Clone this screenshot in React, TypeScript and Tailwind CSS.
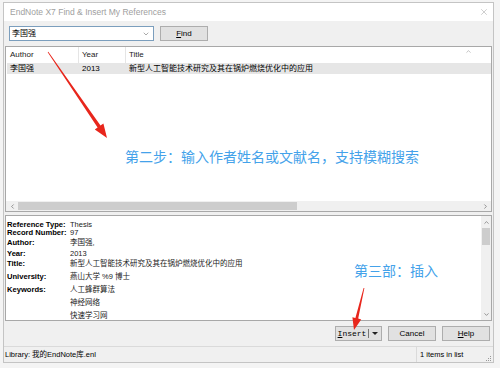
import { X, ChevronDown, ChevronUp, ChevronLeft, ChevronRight } from 'lucide-react'

const ui = "font-['Liberation_Sans','Noto_Sans_CJK_SC',sans-serif]"

const previewRows = [
  { label: 'Reference Type:', value: 'Thesis', h: 'h-[8px]' },
  { label: 'Record Number:', value: '97', h: 'h-[8px]' },
  { label: 'Author:', value: '李国强,', h: 'h-[12px]' },
  { label: 'Year:', value: '2013', h: 'h-[10px]' },
  { label: 'Title:', value: '新型人工智能技术研究及其在锅炉燃烧优化中的应用', h: 'h-[10px]' },
  { label: 'University:', value: '燕山大学 %9 博士', h: 'h-[16px]' },
  { label: 'Keywords:', value: '人工蜂群算法', h: 'h-[10px]' },
  { label: '', value: '神经网络', h: 'h-[16px]' },
  { label: '', value: '快速学习网', h: 'h-[10px]' },
]

function Annotations() {
  return (
    <div className="pointer-events-none absolute inset-0">
      <svg width="500" height="368" className="absolute left-0 top-0">
        <polygon
          fill="#e8261c"
          points="48.3,51.8 100.5,125.4 103.4,123.4 107,138 94.8,129.5 97.6,127.5 47.7,52.2"
        />
        <polygon
          fill="#e8261c"
          points="364.4,288.1 358.2,318.6 361.2,319.4 354,330 352.4,317.3 355.4,318 363.6,287.9"
        />
      </svg>
      <div className={`absolute left-[125px] top-[148px] text-[14px] leading-[18px] text-[#44a2ea] ${ui}`}>
        第二步：输入作者姓名或文献名，支持模糊搜索
      </div>
      <div className={`absolute left-[354px] top-[262px] text-[14px] leading-[18px] text-[#44a2ea] ${ui}`}>
        第三部：插入
      </div>
    </div>
  )
}

export default function App() {
  return (
    <div className={`relative h-[368px] w-[500px] overflow-hidden bg-[#f4f4f4] ${ui}`}>
      <div className="ml-[3px] mt-[2px] flex h-[361px] w-[491px] flex-col border border-[#c4c4c4] bg-[#f0f0f0]">
        {/* title bar */}
        <div className="flex h-[18px] items-center justify-between bg-white pl-[6px] pr-[4px] text-[8.5px] text-[#a0a0a0]">
          <span>EndNote X7 Find &amp; Insert My References</span>
          <X size={10} strokeWidth={1} className="text-[#8a8a8a]" />
        </div>

        {/* search toolbar */}
        <div className="flex h-[25px] items-center pl-[5px]">
          <div className="flex h-[15px] w-[145px] items-center justify-between border border-[#7b9ebd] bg-white pl-[2px] pr-[3px] text-[8px] text-black">
            <span>李国强</span>
            <ChevronDown size={8} strokeWidth={1.5} className="text-[#555]" />
          </div>
          <button
            type="button"
            className="ml-[6px] flex h-[15px] w-[48px] items-center justify-center border border-[#adadad] bg-[#e1e1e1] text-[8px] text-black"
          >
            <span className="underline">F</span>ind
          </button>
        </div>

        {/* result list */}
        <div className="mx-[1px] flex h-[166px] flex-col border border-[#a8a8a8] bg-white">
          <div className="relative flex h-[16px] items-center text-[8px] text-[#222]">
            <div className="flex h-full w-[73px] items-center border-r border-[#e5e5e5] pl-[4px]">Author</div>
            <div className="flex h-full w-[47px] items-center border-r border-[#e5e5e5] pl-[3px]">Year</div>
            <div className="flex h-full flex-1 items-center pl-[3px]">Title</div>
            <ChevronUp size={7} strokeWidth={1.5} className="absolute left-[459px] top-[1px] text-[#777]" />
          </div>
          <div className="ml-[1px] flex h-[11px] items-center bg-[#e6e6e6] text-[8px] text-black">
            <div className="w-[72px] pl-[3px]">李国强</div>
            <div className="w-[47px] pl-[3px]">2013</div>
            <div className="flex-1 pl-[3px]">新型人工智能技术研究及其在锅炉燃烧优化中的应用</div>
          </div>
          <div className="flex-1" />
          <div className="flex h-[10px] items-center bg-[#f0f0f0]">
            <div className="flex w-[12px] items-center justify-center">
              <ChevronLeft size={7} strokeWidth={2} className="text-[#555]" />
            </div>
            <div className="h-[8px] w-[279px] bg-[#cdcdcd]" />
            <div className="flex-1" />
            <div className="flex w-[12px] items-center justify-center">
              <ChevronRight size={7} strokeWidth={2} className="text-[#555]" />
            </div>
          </div>
        </div>

        {/* splitter */}
        <div className="h-[3px]" />

        {/* preview */}
        <div className="mx-[1px] flex h-[106px] border border-[#a8a8a8] bg-white">
          <div className="flex-1 pl-[1px] pt-[5px] text-black">
            {previewRows.map((r, i) => (
              <div key={i} className={`flex ${r.h} items-center`}>
                <div className="w-[63px] shrink-0 whitespace-nowrap text-[7.6px] font-bold leading-none">{r.label}</div>
                <div className="text-[7.5px] leading-none text-[#222]">{r.value}</div>
              </div>
            ))}
          </div>
          <div className="flex w-[10px] flex-col items-center bg-[#f0f0f0]">
            <ChevronUp size={7} strokeWidth={2} className="mt-[3px] text-[#555]" />
            <div className="mt-[2px] h-[17px] w-[8px] bg-[#cdcdcd]" />
            <div className="flex-1" />
            <ChevronDown size={7} strokeWidth={2} className="mb-[2px] text-[#555]" />
          </div>
        </div>

        {/* buttons */}
        <div className="flex h-[25px] items-center justify-end gap-[6px] pr-[3px] text-[8px] text-black">
          <div className="flex h-[15px] w-[47px] items-center border border-[#adadad] bg-[#e1e1e1]">
            <span className="flex-1 text-center font-['Liberation_Mono',monospace] text-[8px]">
              <span className="underline">I</span>nsert
            </span>
            <div className="h-[9px] w-px bg-[#777]" />
            <div className="flex w-[12px] items-center justify-center">
              <div className="h-0 w-0 border-x-[3px] border-t-[3px] border-x-transparent border-t-[#222]" />
            </div>
          </div>
          <div className="flex h-[15px] w-[48px] items-center justify-center border border-[#adadad] bg-[#e1e1e1]">
            Cancel
          </div>
          <div className="flex h-[15px] w-[48px] items-center justify-center border border-[#adadad] bg-[#e1e1e1]">
            <span className="underline">H</span>elp
          </div>
        </div>

        {/* status bar */}
        <div className="flex h-[16px] items-center border-t border-[#dadada] text-[7.5px] text-black">
          <div className="flex-1 pl-[1px]">Library: 我的EndNote库.enl</div>
          <div className="flex h-full w-[77px] items-center justify-between border-l border-[#dadada] pl-[3px]">
            <span>1 items in list</span>
            <svg width="6" height="6" className="mr-[1px] mt-[8px] text-[#999]">
              <rect x="4" y="0" width="1" height="1" fill="currentColor" />
              <rect x="2" y="2" width="1" height="1" fill="currentColor" />
              <rect x="4" y="2" width="1" height="1" fill="currentColor" />
              <rect x="0" y="4" width="1" height="1" fill="currentColor" />
              <rect x="2" y="4" width="1" height="1" fill="currentColor" />
              <rect x="4" y="4" width="1" height="1" fill="currentColor" />
            </svg>
          </div>
        </div>
      </div>
      <Annotations />
    </div>
  )
}
